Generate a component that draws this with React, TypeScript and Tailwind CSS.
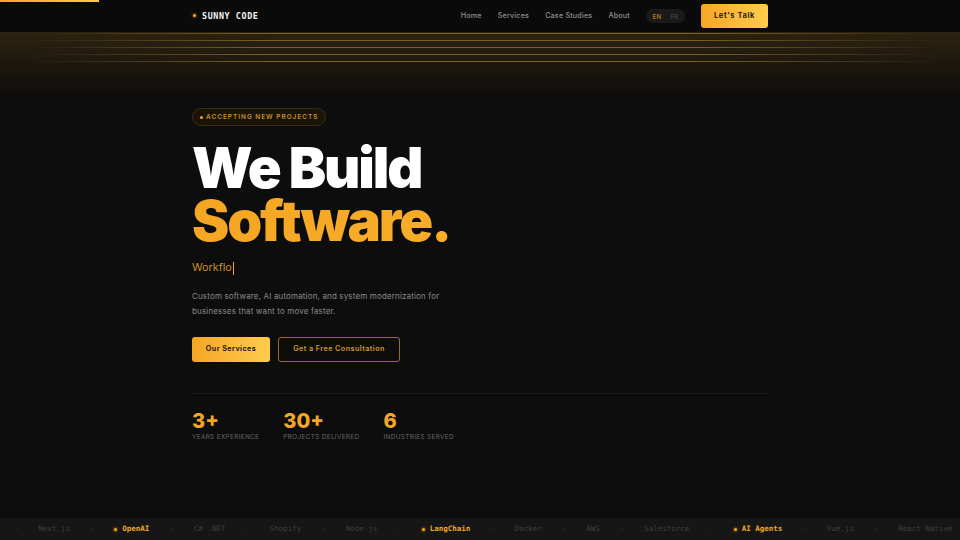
const navLinks = ["Home", "Services", "Case Studies", "About"];

const stats = [
  { value: "3+", label: "YEARS EXPERIENCE" },
  { value: "30+", label: "PROJECTS DELIVERED" },
  { value: "6", label: "INDUSTRIES SERVED" },
];

const ticker = [
  { name: "Next.js" },
  { name: "OpenAI", hot: true },
  { name: "C# .NET" },
  { name: "Shopify" },
  { name: "Node.js" },
  { name: "LangChain", hot: true },
  { name: "Docker" },
  { name: "AWS" },
  { name: "Salesforce" },
  { name: "AI Agents", hot: true },
  { name: "Vue.js" },
  { name: "React Native" },
];

function Nav() {
  return (
    <header className="h-8 shrink-0 bg-[#0a0a0a]">
      <div className="mx-auto flex h-8 w-[576px] items-center justify-between">
        <div className="flex items-center gap-[6px] pl-[1px]">
          <span className="h-[3px] w-[3px] rounded-full bg-[#f5a623] shadow-[0_0_3px_0_#f5a623]" />
          <span className="font-['DejaVu_Sans_Mono',monospace] text-[8.4px] font-bold tracking-[0.6px] text-[#f2f2f2]">
            SUNNY CODE
          </span>
        </div>
        <div className="flex items-center">
          <nav className="flex items-center gap-[16px] text-[7.2px] font-medium tracking-[0.18px] text-[#909090]">
            {navLinks.map((link) => (
              <span key={link}>{link}</span>
            ))}
          </nav>
          <div className="ml-[16px] flex h-[14px] w-[39px] items-center justify-center gap-[9px] rounded-full bg-[#1a1a1a] text-[6px] font-semibold tracking-[0.3px]">
            <span className="text-[#a87a20]">EN</span>
            <span className="text-[#404040]">FR</span>
          </div>
          <button className="ml-[16px] h-6 w-[67px] rounded-[3px] bg-gradient-to-r from-[#f5a623] to-[#ffcc4d] text-[7.6px] font-semibold tracking-[0.6px] text-[#0a0a0a]">
            Let's Talk
          </button>
        </div>
      </div>
    </header>
  );
}

function Rays() {
  const line = "h-px bg-[linear-gradient(90deg,transparent_3%,#7d5f24_28%,#7d5f24_72%,transparent_98%)]";
  return (
    <div className="flex h-[64px] shrink-0 flex-col gap-[6px] bg-gradient-to-b from-[#2c2210] to-[#0f0e0c] pt-px">
      <div className={line} />
      <div className={line} />
      <div className={line} />
      <div className={line} />
      <div className={line} />
    </div>
  );
}

function Hero() {
  return (
    <section className="mx-auto w-[576px] pt-3">
      <div className="flex h-[18px] w-[134px] items-center gap-[3px] rounded-full border border-[#3a2c12] bg-[#1a1408] pl-[7px] text-[6.4px] leading-none font-semibold tracking-[1.03px] text-[#c9922a]">
        <span className="h-[3px] w-[3px] rounded-full bg-[#f5a623]" />
        ACCEPTING NEW PROJECTS
      </div>
      <h1 className="mt-[16px] text-[56px] leading-[53px] font-black tracking-[-2.1px]">
        <span className="block text-white">We Build</span>
        <span className="block bg-gradient-to-r from-[#f5a623] to-[#fbb62e] bg-clip-text text-transparent">
          Software.
        </span>
      </h1>
      <div className="mt-[12px] flex h-[16px] items-center text-[10.8px] text-[#c98f26]">
        Workflo
        <span className="ml-px h-[13px] w-px bg-[#f5a623]" />
      </div>
      <p className="mt-[13px] w-[256px] text-[8px] leading-[14.6px] tracking-[0.15px] text-[#8a8a8a]">
        Custom software, AI automation, and system modernization for businesses that want to move faster.
      </p>
      <div className="mt-[19px] flex gap-2">
        <button className="h-[25px] w-[78px] rounded-[3px] bg-gradient-to-r from-[#f5a623] to-[#ffcc4d] text-[7.2px] font-semibold tracking-[0.45px] text-[#0a0a0a]">
          Our Services
        </button>
        <button className="h-[25px] w-[122px] rounded-[3px] border border-[#9a6f20] text-[7.2px] font-semibold tracking-[0.45px] text-[#d3982a]">
          Get a Free Consultation
        </button>
      </div>
      <div className="mt-[31px] flex gap-[24px] border-t border-[#1a1a1a] pt-[15px]">
        {stats.map((stat) => (
          <div key={stat.label}>
            <div className="text-[20px] leading-[24px] font-extrabold text-[#f5a623]">{stat.value}</div>
            <div className="text-[6.4px] leading-[9px] tracking-[0.35px] text-[#666666]">{stat.label}</div>
          </div>
        ))}
      </div>
    </section>
  );
}

function Ticker() {
  return (
    <div className="mt-auto flex h-[22px] shrink-0 items-center overflow-hidden whitespace-nowrap bg-[#161616] pl-[14px] font-['DejaVu_Sans_Mono',monospace] text-[7.5px]">
      {ticker.map((item) => (
        <div key={item.name} className="flex shrink-0 items-center">
          <span className="mr-[19.7px] text-[#3a3a3a]">·</span>
          {item.hot ? (
            <span className="mr-[20.2px] flex items-center gap-[5px] font-bold text-[#f0a825]">
              <span className="h-[3px] w-[3px] rounded-full bg-[#f5a623] shadow-[0_0_3px_0_#f5a623]" />
              {item.name}
            </span>
          ) : (
            <span className="mr-[20.2px] text-[#3f3f3f]">{item.name}</span>
          )}
        </div>
      ))}
    </div>
  );
}

export default function App() {
  return (
    <div className="relative flex h-[540px] w-[960px] flex-col overflow-hidden bg-[#0d0d0d] font-['Inter',sans-serif]">
      <div className="absolute top-0 left-0 h-[1.5px] w-[99px] bg-gradient-to-r from-[#f5a623] to-[#ffcc4d]" />
      <Nav />
      <Rays />
      <Hero />
      <Ticker />
    </div>
  );
}
